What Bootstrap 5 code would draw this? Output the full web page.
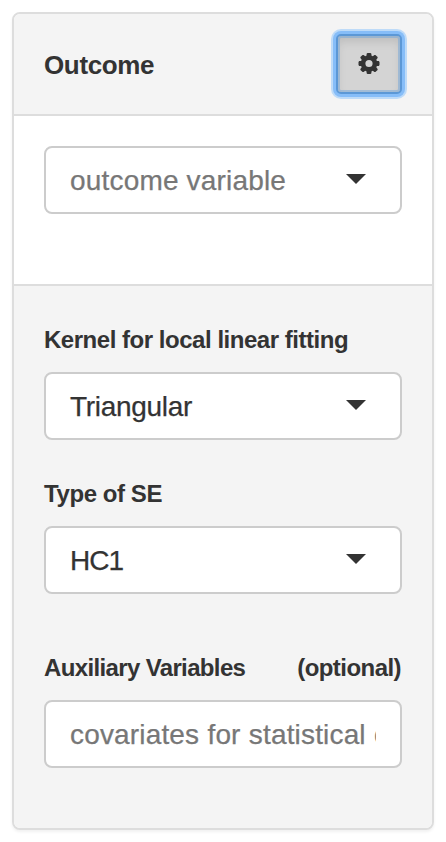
<!DOCTYPE html>
<html lang="en">
<head>
<meta charset="utf-8">
<meta name="viewport" content="width=device-width, initial-scale=1">
<title>Outcome</title>
<link href="https://cdn.jsdelivr.net/npm/bootstrap@5.3.0/dist/css/bootstrap.min.css" rel="stylesheet">
<style>
body { font-family: "Liberation Sans", Arial, sans-serif; color: #333; background: #fff; padding: 12px; }
.panel-card { height: 818px; border: 2px solid #ddd; border-radius: 8px; box-shadow: 0 2px 3px rgba(0,0,0,.06); --bs-card-color: #333; color: #333; }
.panel-card > .card-header { height: 102px; padding: 0 30px; background: #f4f4f4; border-bottom: 2px solid #ddd; border-radius: 6px 6px 0 0; }
.panel-card > .card-body { flex: none; height: 168px; padding: 30px; }
.panel-card > .card-footer { padding: 38px 30px 0; background: #f4f4f4; border-top: 2px solid #ddd; border-radius: 0 0 6px 6px; }
.panel-title { font-size: 26px; line-height: 32px; letter-spacing: -.35px; padding-top: 2px; }
.field-label { font-size: 24px; line-height: 32px; margin-bottom: 16px; white-space: nowrap; letter-spacing: -.47px; }
.lb-se { letter-spacing: -.42px; }
.lb-aux { letter-spacing: -.64px; }
.lb-opt { letter-spacing: -.55px; padding-right: 1px; }
.field-group + .field-group { margin-top: 38px; }
.field-group + .group-aux { margin-top: 58px; }
.field-box { height: 68px; padding: 2px 24px 0; border: 2px solid #ccc; border-radius: 8px; background: #fff; color: #333; font-size: 28px; line-height: 36px; text-align: left; letter-spacing: -.3px; -webkit-text-stroke: .25px; }
.field-box:hover { background: #fff; border-color: #ccc; color: #333; }
.field-box.is-empty, .field-box.is-empty:hover { color: #777; letter-spacing: .18px; }
.field-box.is-short { letter-spacing: -1px; }
.field-box.is-input { letter-spacing: .16px; word-spacing: .3px; }
.field-box::placeholder { color: #777; opacity: 1; }
.field-box .arrow { width: 20px; height: 10px; margin: 0 10px 5px 0; fill: #333; }
.btn-gear, .btn-gear:hover { width: 66px; height: 60px; padding: 0; border: 2px solid #5c98d6; border-radius: 5px; background: #d4d4d4;
  box-shadow: inset 0 0 0 2px rgba(122,169,216,.55), inset 0 6px 8px rgba(0,0,0,.1), 0 0 0 3px #86bdf8, 0 0 0 5px #bedbf8; }
</style>
</head>
<body>
<div class="card panel-card">
  <div class="card-header d-flex align-items-center justify-content-between">
    <div class="panel-title fw-bold">Outcome</div>
    <button type="button" class="btn btn-gear d-flex align-items-center justify-content-center" aria-label="Settings">
      <svg width="22" height="22" viewBox="-11 -10.5 22 22" aria-hidden="true">
        <path fill="#333" fill-rule="evenodd" d="M-1.5-10.5H1.5L2.4-9.8V-7.9L3.8-7.3 5.4-8.6H6.4L8.6-6.4V-5.4L7.3-3.8 7.9-2.4H9.8L10.5-1.5V1.5L9.8 2.4H7.9L7.3 3.8 8.6 5.4V6.4L6.4 8.6H5.4L3.8 7.3 2.4 7.9V9.8L1.5 10.5H-1.5L-2.4 9.8V7.9L-3.8 7.3-5.4 8.6H-6.4L-8.6 6.4V5.4L-7.3 3.8-7.9 2.4H-9.8L-10.5 1.5V-1.5L-9.8-2.4H-7.9L-7.3-3.8-8.6-5.4V-6.4L-6.4-8.6H-5.4L-3.8-7.3-2.4-7.9V-9.8ZM0-3.6A3.6 3.6 0 1 0 0 3.6 3.6 3.6 0 1 0 0-3.6Z"/>
      </svg>
    </button>
  </div>
  <div class="card-body">
    <button type="button" class="btn field-box is-empty w-100 d-flex align-items-center justify-content-between">
      <span>outcome variable</span>
      <svg class="arrow" viewBox="0 0 20 10" aria-hidden="true"><path d="M0 0H20L10 10Z"/></svg>
    </button>
  </div>
  <div class="card-footer flex-grow-1">
    <div class="field-group">
      <div class="field-label fw-bold">Kernel for local linear fitting</div>
      <button type="button" class="btn field-box w-100 d-flex align-items-center justify-content-between">
        <span>Triangular</span>
        <svg class="arrow" viewBox="0 0 20 10" aria-hidden="true"><path d="M0 0H20L10 10Z"/></svg>
      </button>
    </div>
    <div class="field-group">
      <div class="field-label lb-se fw-bold">Type of SE</div>
      <button type="button" class="btn field-box is-short w-100 d-flex align-items-center justify-content-between">
        <span>HC1</span>
        <svg class="arrow" viewBox="0 0 20 10" aria-hidden="true"><path d="M0 0H20L10 10Z"/></svg>
      </button>
    </div>
    <div class="field-group group-aux">
      <div class="field-label fw-bold d-flex justify-content-between"><span class="lb-aux">Auxiliary Variables</span><span class="lb-opt">(optional)</span></div>
      <input type="text" class="form-control field-box is-input" placeholder="covariates for statistical controls">
    </div>
  </div>
</div>
<script src="https://cdn.jsdelivr.net/npm/bootstrap@5.3.0/dist/js/bootstrap.bundle.min.js"></script>
</body>
</html>
